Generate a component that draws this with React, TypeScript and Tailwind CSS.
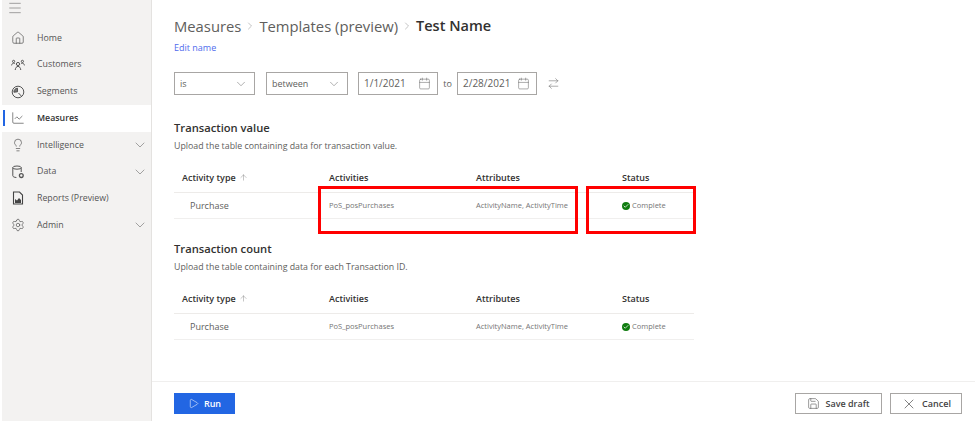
import { FC, ReactNode } from 'react';
import {
  ArrowRightLeft,
  ArrowUp,
  Calendar,
  Check,
  ChevronDown,
  ChevronRight,
  ChartLine,
  House,
  Lightbulb,
  Menu,
  Play,
  Save,
  Settings,
  X,
} from 'lucide-react';

const CustomersIcon = () => (
  <svg width="14" height="14" viewBox="0 0 14 14" fill="none" stroke="#555" strokeWidth="1">
    <circle cx="7" cy="6" r="1.6" />
    <path d="M4.2 12c.3-2.4 1.4-3.6 2.8-3.6S9.500 9.600 9.800 12" />
    <circle cx="2.600" cy="3.400" r="1.100" />
    <path d="M.6 7.400c.2-1.400 1-2.200 2-2.200.6 0 1.100.2 1.500.7" />
    <circle cx="11.400" cy="3.400" r="1.100" />
    <path d="M13.400 7.400c-.2-1.400-1-2.200-2-2.200-.6 0-1.100.2-1.500.7" />
  </svg>
);

const SegmentsIcon = () => (
  <svg width="14" height="14" viewBox="0 0 14 14" fill="none" stroke="#555" strokeWidth="1">
    <circle cx="7" cy="7" r="5.800" />
    <path d="M6.500 3.200v3.600l-3.600.4a3.700 3.700 0 0 1 3.600-4Z" fill="#777" />
    <path d="M7.500 8l2.800 3" />
  </svg>
);

const DataIcon = () => (
  <svg width="14" height="14" viewBox="0 0 14 14" fill="none" stroke="#555" strokeWidth="1">
    <ellipse cx="6" cy="2.600" rx="4.200" ry="1.600" />
    <path d="M1.800 2.600v8.200c0 .9 1.500 1.600 3.600 1.700M10.200 2.600V7" />
    <circle cx="10.300" cy="10.600" r="1.900" strokeWidth="1.300" />
  </svg>
);

const ReportsIcon = () => (
  <svg width="14" height="14" viewBox="0 0 14 14" fill="none" stroke="#444" strokeWidth="1.100">
    <path d="M2.500 1h6l3 3v9h-9z" />
    <path d="M4 12V8l2 1.500L8 7l2 2v3z" fill="#444" stroke="none" />
  </svg>
);

type NavItem = { label: string; icon: ReactNode; active?: boolean; expandable?: boolean };

const navItems: NavItem[] = [
  { label: 'Home', icon: <House size={14} strokeWidth={1.2} /> },
  { label: 'Customers', icon: <CustomersIcon /> },
  { label: 'Segments', icon: <SegmentsIcon /> },
  { label: 'Measures', icon: <ChartLine size={14} strokeWidth={1.2} />, active: true },
  { label: 'Intelligence', icon: <Lightbulb size={14} strokeWidth={1.2} />, expandable: true },
  { label: 'Data', icon: <DataIcon />, expandable: true },
  { label: 'Reports (Preview)', icon: <ReportsIcon /> },
  { label: 'Admin', icon: <Settings size={14} strokeWidth={1.2} />, expandable: true },
];

const Sidebar = () => (
  <aside className="ml-[2px] flex h-[421px] w-[150px] flex-none flex-col border-r border-[#e4e2e0] bg-[#f3f2f1]">
    <div className="flex h-[25px] flex-none items-start pl-[5px] text-[#777]">
      <Menu size={16} strokeWidth={1} />
    </div>
    {navItems.map((item) => (
      <div
        key={item.label}
        className={`relative flex h-[26.700px] flex-none items-center pl-[9px] ${item.active ? 'bg-white' : ''}`}
      >
        {item.active && <div className="absolute left-[1px] top-[5px] h-[16px] w-[2px] bg-[#2266e3]" />}
        <span className="flex w-[26px] flex-none text-[#555]">{item.icon}</span>
        <span className={`text-[8.800px] ${item.active ? 'font-semibold text-[#333]' : 'text-[#555]'}`}>{item.label}</span>
        {item.expandable && <ChevronDown size={16} strokeWidth={1} className="absolute left-[130px] text-[#777]" />}
      </div>
    ))}
  </aside>
);

const Field: FC<{ value: string; width: string; textSize: string; icon: ReactNode }> = ({ value, width, textSize, icon }) => (
  <div className={`flex h-[23px] items-center justify-between border border-[#a8a6a4] pl-[5px] pr-[6px] text-[#605e5c] ${width} ${textSize}`}>
    <span>{value}</span>
    {icon}
  </div>
);

const Section: FC<{ title: string; subtitle: string; className: string }> = ({ title, subtitle, className }) => (
  <section className={className}>
    <h2 className="text-[11.200px] font-semibold leading-[16px] text-[#323130]">{title}</h2>
    <p className="mt-[4px] text-[8.800px] leading-[12px] text-[#605e5c]">{subtitle}</p>
    <div className="mt-[11px] w-[520px]">
      <div className="grid h-[30px] grid-cols-[147px_147px_146px_72px] items-center border-b border-[#edebe9] pl-[8px] text-[9px] font-semibold text-[#323130]">
        <span className="flex items-center gap-[3px]">
          Activity type <ArrowUp size={9} strokeWidth={1} className="text-[#666]" />
        </span>
        <span>Activities</span>
        <span>Attributes</span>
        <span>Status</span>
      </div>
      <div className="grid h-[26px] grid-cols-[147px_147px_146px_72px] items-center border-b border-[#f0efee] pl-[8px] text-[#757575]">
        <span className="pl-[8px] text-[9px] text-[#605e5c]">Purchase</span>
        <span className="text-[7.500px]">PoS_posPurchases</span>
        <span className="text-[7.500px]">ActivityName, ActivityTime</span>
        <span className="flex items-center gap-[2px] text-[7.500px]">
          <span className="flex h-[8px] w-[8px] items-center justify-center rounded-full bg-[#107c10] text-white">
            <Check size={6} strokeWidth={3} />
          </span>
          Complete
        </span>
      </div>
    </div>
  </section>
);

const FooterButton: FC<{ label: string; width: string; icon: ReactNode }> = ({ label, width, icon }) => (
  <button className={`flex h-[21px] items-center justify-center gap-[5px] border border-[#a8a6a4] bg-white text-[9px] font-semibold text-[#444] ${width}`}>
    {icon}
    {label}
  </button>
);

export default function App() {
  return (
    <div className="relative flex h-[423px] w-[975px] overflow-hidden bg-white font-['Open_Sans',sans-serif]">
      <Sidebar />
      <main className="flex min-w-0 flex-1 flex-col">
        <div className="flex-1 pl-[22px]">
          <div className="mt-[15px] flex h-[22px] items-center text-[14.800px] text-[#605e5c]">
            <span>Measures</span>
            <ChevronRight size={12} strokeWidth={1} className="mx-[3px] text-[#888]" />
            <span>Templates (preview)</span>
            <ChevronRight size={12} strokeWidth={1} className="mx-[3px] text-[#888]" />
            <span className="text-[14.500px] font-semibold text-[#323130]">Test Name</span>
          </div>
          <a className="mt-[5px] block text-[9px] leading-[12px] text-[#4f6bed]">Edit name</a>

          <div className="mt-[18px] flex h-[23px] items-center">
            <Field value="is" width="w-[81px]" textSize="text-[9px]" icon={<ChevronDown size={14} strokeWidth={1} className="text-[#777]" />} />
            <div className="w-[11px]" />
            <Field value="between" width="w-[82px]" textSize="text-[9px]" icon={<ChevronDown size={14} strokeWidth={1} className="text-[#777]" />} />
            <div className="w-[10px]" />
            <Field value="1/1/2021" width="w-[80px]" textSize="text-[10px]" icon={<Calendar size={13} strokeWidth={1} className="text-[#666]" />} />
            <span className="w-[19px] text-center text-[9px] text-[#605e5c]">to</span>
            <Field value="2/28/2021" width="w-[80px]" textSize="text-[10px]" icon={<Calendar size={13} strokeWidth={1} className="text-[#666]" />} />
            <ArrowRightLeft size={13} strokeWidth={1} className="ml-[10px] text-[#666]" />
          </div>

          <Section
            className="mt-[25px]"
            title="Transaction value"
            subtitle="Upload the table containing data for transaction value."
          />
          <Section
            className="mt-[22px]"
            title="Transaction count"
            subtitle="Upload the table containing data for each Transaction ID."
          />
        </div>

        <footer className="flex h-[42px] flex-none items-start justify-between border-t border-[#f0efee] pl-[22px] pr-[13px] pt-[11px]">
          <button className="flex h-[21px] w-[61px] items-center justify-center gap-[5px] bg-[#2266e3] text-[9px] font-semibold text-white">
            <Play size={11} strokeWidth={1.2} />
            Run
          </button>
          <div className="flex gap-[8px]">
            <FooterButton label="Save draft" width="w-[87px]" icon={<Save size={13} strokeWidth={1} />} />
            <FooterButton label="Cancel" width="w-[72px]" icon={<X size={16} strokeWidth={1} />} />
          </div>
        </footer>
      </main>

      <div className="pointer-events-none absolute left-[318px] top-[186px] h-[48px] w-[260px] border-[3px] border-[#ff0000]" />
      <div className="pointer-events-none absolute left-[586px] top-[186px] h-[48px] w-[110px] border-[3px] border-[#ff0000]" />
    </div>
  );
}
